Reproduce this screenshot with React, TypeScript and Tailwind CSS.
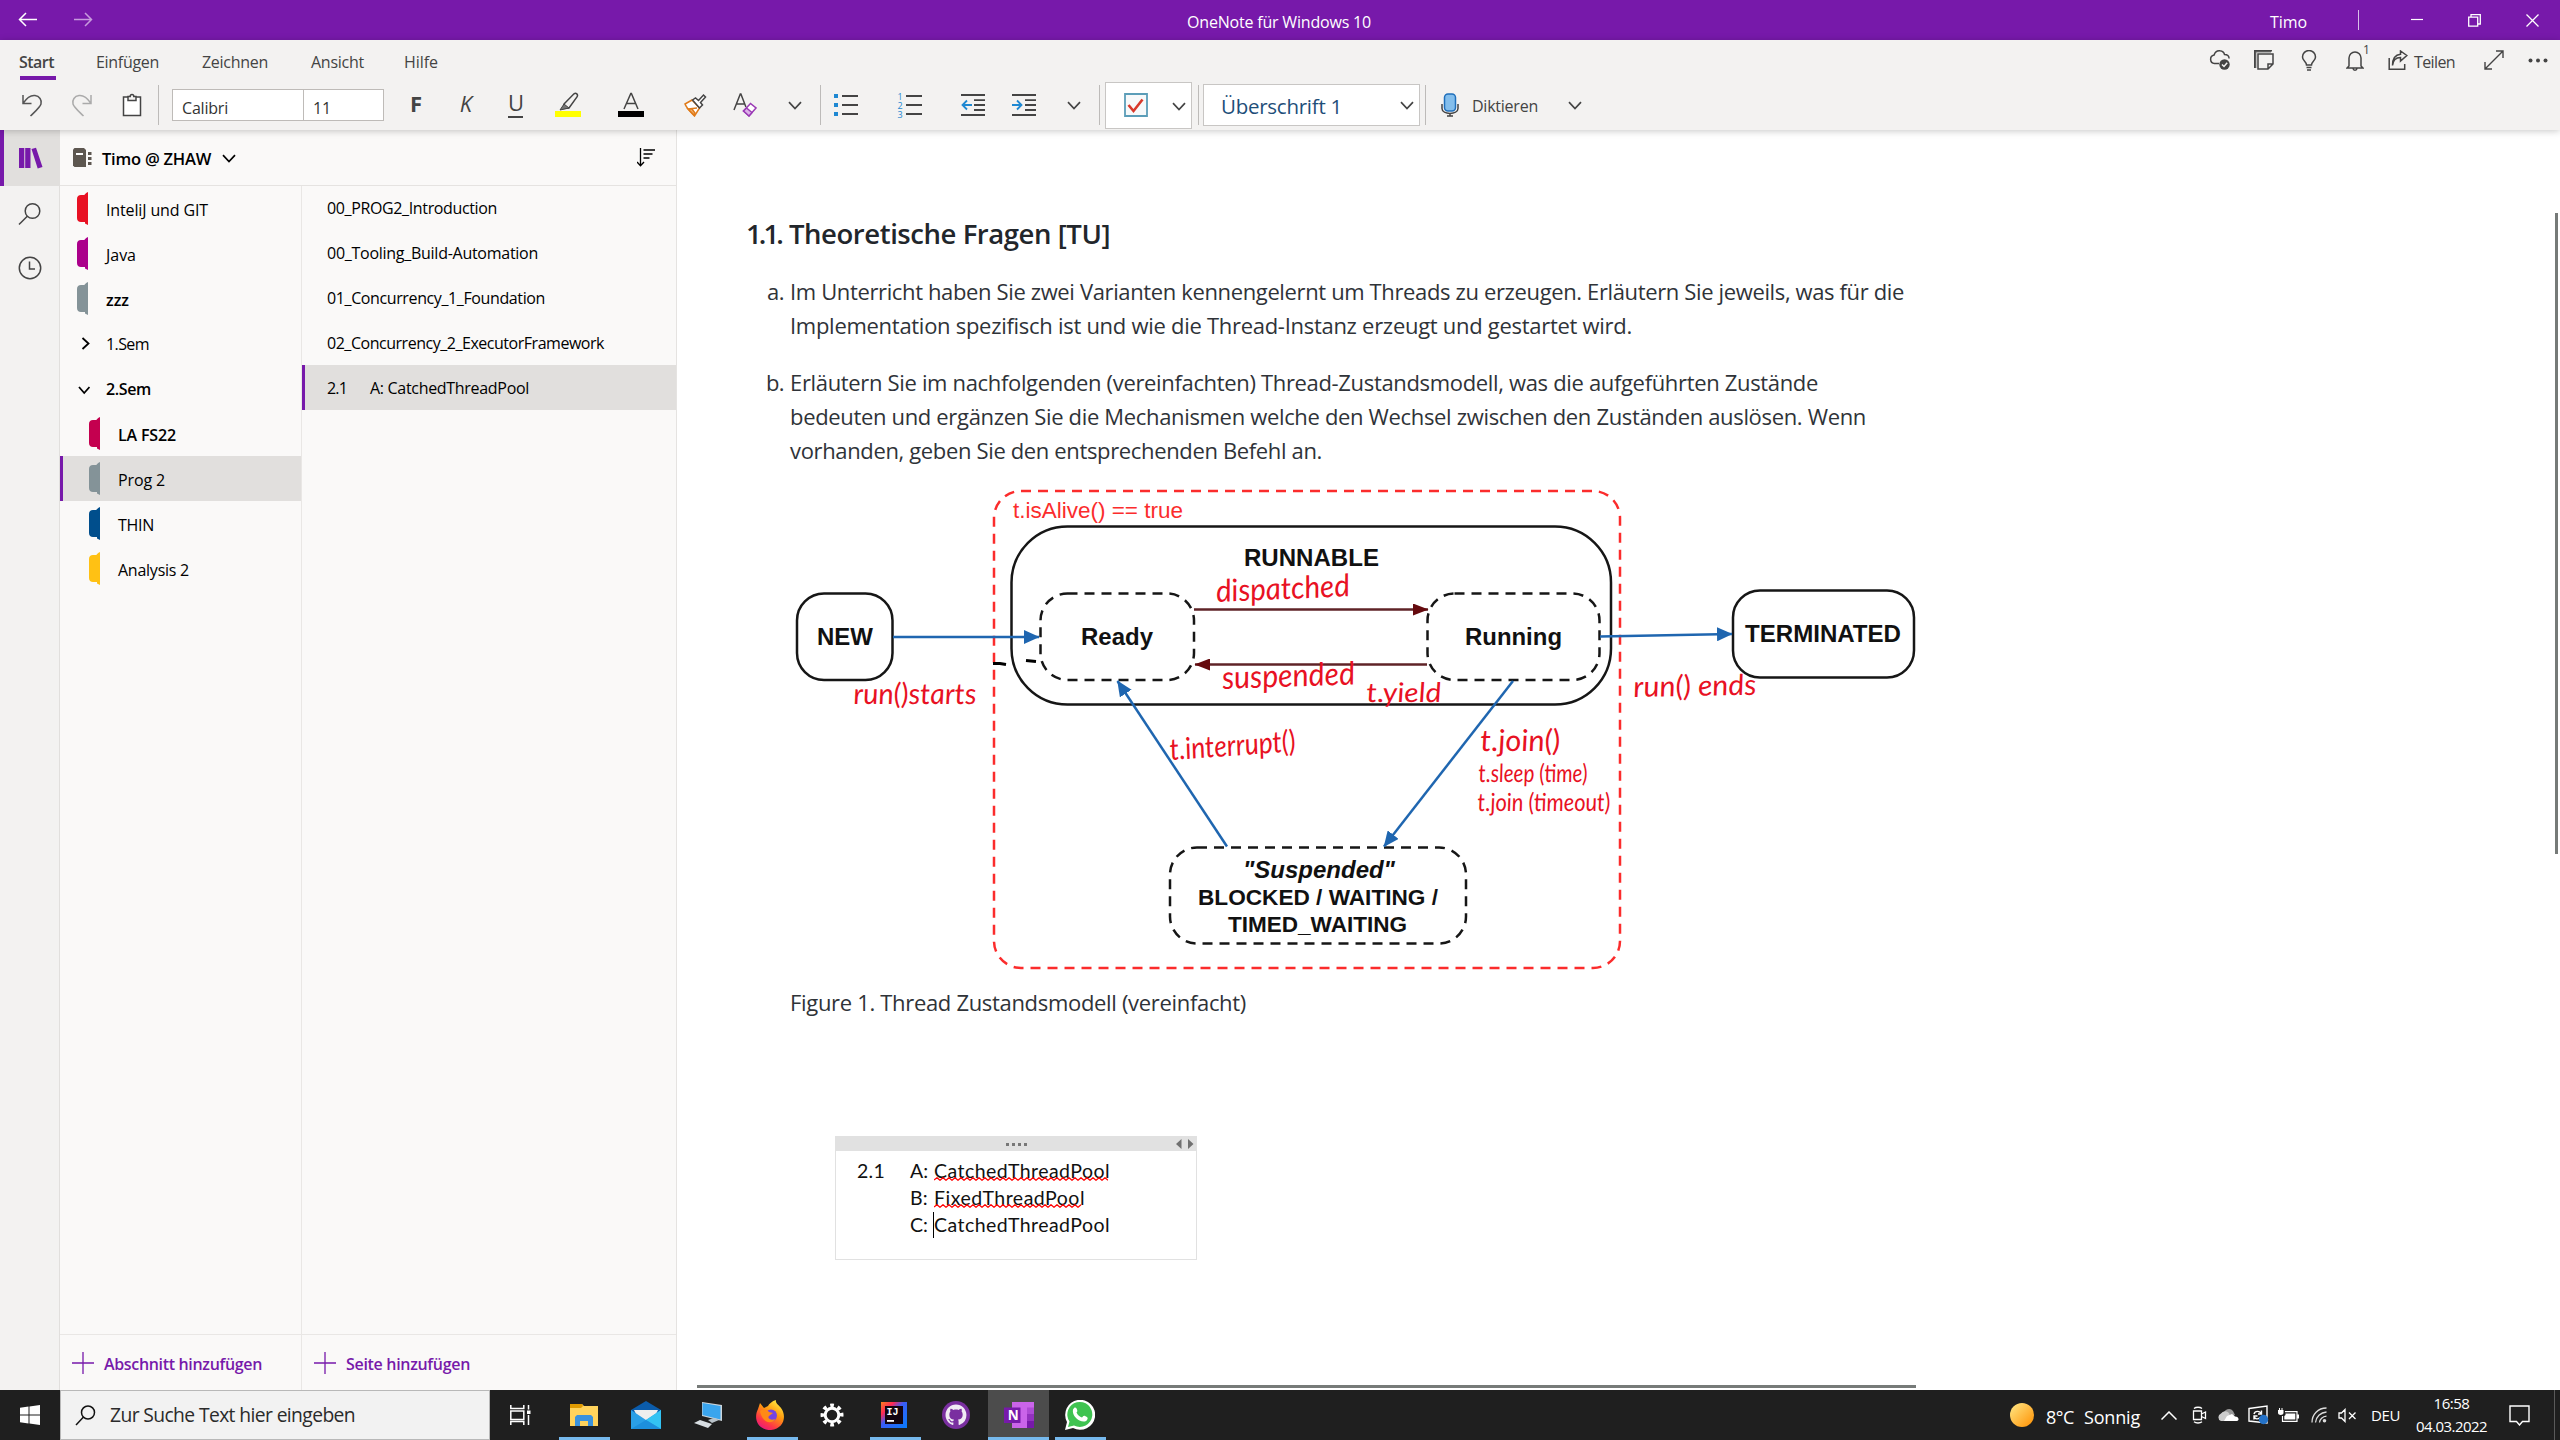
import React, { useLayoutEffect, useRef, useState } from "react";

/* Text whose tracking is computed so that it spans a given width. */
function Fit({ w, children, className = "" }: { w: number; children: string; className?: string }) {
  const ref = useRef<HTMLSpanElement>(null);
  const [ls, setLs] = useState(0);
  useLayoutEffect(() => {
    const el = ref.current;
    if (!el) return;
    el.style.letterSpacing = "0px";
    const nat = el.getBoundingClientRect().width;
    const v = (w - nat) / Math.max(1, children.length);
    el.style.letterSpacing = v + "px";
    setLs(v);
  }, [w, children]);
  return (
    <span ref={ref} className={"inline-block shrink-0 whitespace-pre " + className} style={{ letterSpacing: ls + "px" }}>
      {children}
    </span>
  );
}

type IconProps = { w: number; h: number; children: React.ReactNode; className?: string; sw?: number; vb?: string };
function I({ w, h, children, className = "text-[#444]", sw = 1.5, vb }: IconProps) {
  return (
    <svg width={w} height={h} viewBox={vb ?? `0 0 ${w} ${h}`} fill="none" stroke="currentColor" strokeWidth={sw} className={"block shrink-0 " + className}>
      {children}
    </svg>
  );
}

const Chevron = ({ className = "text-[#444]" }: { className?: string }) => (
  <I w={14} h={9} sw={1.7} className={className}><path d="M1 1.2l6 6.3 6-6.3" /></I>
);
const Cell = ({ className, children }: { className: string; children: React.ReactNode }) => (
  <div className={"flex h-full shrink-0 items-center justify-center " + className}>{children}</div>
);
const Sep = ({ className = "" }: { className?: string }) => <div className={"h-10 w-px shrink-0 bg-[#bdbbb9] " + className} />;

function TitleBar() {
  return (
    <header className="flex h-10 items-center bg-[#7719aa] text-white">
      <div className="flex h-full w-[1187px] items-center gap-[36px] pl-[18px]">
        <I w={20} h={16} className="text-white"><path d="M19 7.5H1.5M8 1L1.5 7.5 8 14" /></I>
        <I w={20} h={16} className="text-[#c79bdd]"><path d="M0 7.5h17.5M11 1l6.500 6.500L11 14" /></I>
      </div>
      <Fit w={184} className="pt-[4px] text-[16px] leading-none">OneNote für Windows 10</Fit>
      <Fit w={37} className="ml-[899px] pt-[4px] text-[16px] leading-none">Timo</Fit>
      <div className="ml-[51px] h-5 w-px bg-[#d9bfe8]" />
      <div className="ml-[52px] flex items-center gap-[45px]">
        <I w={12} h={12} sw={1.200} className="text-white"><path d="M0 5.500h12" /></I>
        <I w={13} h={13} sw={1.300} className="text-white"><path d="M.7 3.200h9v9h-9zM3 3V.7h9.300v9.300H10" /></I>
        <I w={13} h={13} sw={1.300} className="text-white"><path d="M.5.5l12 12M12.500.5l-12 12" /></I>
      </div>
    </header>
  );
}

function Tabs() {
  return (
    <div className="flex h-10 items-center text-[16px] leading-none text-[#444]">
      <div className="relative ml-5 w-[76px] pt-[3px]">
        <Fit w={35} className="-ml-px font-semibold">Start</Fit>
        <div className="absolute left-0 top-[25px] h-[4px] w-[36px] bg-[#7719aa]" />
      </div>
      <Fit w={63} className="pt-[3px]">Einfügen</Fit>
      <Fit w={66} className="ml-[43px] pt-[3px]">Zeichnen</Fit>
      <Fit w={53} className="ml-[43px] pt-[3px]">Ansicht</Fit>
      <Fit w={34} className="ml-[40px] pt-[3px]">Hilfe</Fit>
      <div className="ml-auto flex items-center pr-[12px]">
        <I w={22} h={22} className="mr-[23px]">
          <path d="M10 14.500H5.500a4.300 4.300 0 01-.4-8.500C6 3 8.500 1.500 11 1.800c2.500.2 4 1.800 4.500 3.700 2.500 0 4.500 1.600 4.600 4" />
          <circle cx="15.500" cy="15.500" r="5.200" fill="#444" stroke="none" /><path d="M13 15.500l2 2 3.200-3.800" stroke="#f3f2f1" />
        </I>
        <I w={20} h={20} className="mr-[27px]">
          <path d="M1.200 18V1.200H17" strokeWidth={2.400} stroke="#777" /><path d="M.8 18V.8H18M4 4h15v10l-5 5H4zM19 14h-5v5" />
        </I>
        <I w={17} h={21} className="mr-[28px]"><path d="M5.500 15c0-3.500-4-4-4-8a6.500 6.500 0 0113 0c0 4-4 4.500-4 8zM5.500 17.500h5M6 20h4" /></I>
        <div className="relative mr-[24px]">
          <I w={18} h={21}><path d="M3 16V8a6 6 0 0112 0v8l2 2H1zM7 18.500c.3 2.200 3.700 2.200 4 0" /></I>
          <span className="absolute -top-[6px] left-[17px] text-[12px] leading-none">1</span>
        </div>
        <I w={20} h={20} className="mr-[6px]"><path d="M1.200 8v11.200h15.500V14M4.500 15.500c.5-5 3-8 8-8V11l6.300-5.500L12.500 1v3.200c-5.500.5-8 5-8 11.300z" /></I>
        <Fit w={41} className="mr-[29px] pt-[3px]">Teilen</Fit>
        <I w={20} h={20} sw={1.400} className="mr-[24px]"><path d="M1.500 18.500l17-17M12 1h7v7M1 12v7h7" /></I>
        <I w={20} h={5}><g fill="#444" stroke="none"><circle cx="2.500" cy="2.500" r="2" /><circle cx="10" cy="2.500" r="2" /><circle cx="17.500" cy="2.500" r="2" /></g></I>
      </div>
    </div>
  );
}

function Toolbar() {
  return (
    <div className="flex h-[50px] items-center pl-[7px] text-[#444]">
      <Cell className="w-[50px]"><I w={22} h={24} className="text-[#555]"><path d="M2 2v8.500h8.500M2.200 10.200C6 4.500 10 2 14 2.500c4.500.6 7 4.500 6 8.500-.8 3.200-6 7.500-10.500 12" /></I></Cell>
      <Cell className="w-[50px]"><I w={22} h={24} className="text-[#aaa]"><path d="M20 2v8.500h-8.500M19.800 10.200C16 4.500 12 2 8 2.500 3.500 3.100 1 7 2 11c.8 3.200 6 7.500 10.500 12" /></I></Cell>
      <Cell className="w-[50px]"><I w={20} h={24}><path d="M1.500 4h17v18.500h-17z" fill="#fff" /><path d="M6 7.500V3.500h2.200c0-2.800 3.600-2.800 3.600 0H14v4z" fill="#f3f2f1" /></I></Cell>
      <Sep className="ml-px" />
      <div className="ml-[13px] flex h-[32px] w-[212px] items-center border border-[#bebbb8] bg-white text-[16px] leading-none text-[#333]">
        <div className="flex h-full w-[131px] items-center border-r border-[#bebbb8] pl-[9px]"><Fit w={46} className="pt-[5px]">Calibri</Fit></div>
        <Fit w={18} className="ml-[9px] pt-[5px]">11</Fit>
      </div>
      <Cell className="ml-[6px] w-[52px] pb-1 text-[22px] font-bold leading-none">F</Cell>
      <Cell className="w-[48px] pb-1 text-[22px] italic leading-none">K</Cell>
      <Cell className="w-[52px] pt-[1px]">
        <div className="flex flex-col items-center"><span className="h-[21px] text-[22px] leading-[18px]">U</span><span className="mt-0.5 h-[1.500px] w-[15px] bg-[#444]" /></div>
      </Cell>
      <Cell className="w-[51px]">
        <I w={26} h={26}><path d="M0 19h26v6H0z" fill="#ff0" stroke="none" /><path d="M9 12L19 1.800c2-1.500 4.500.8 3 3L14 16l-5.500.5z" /><path d="M9 12l5 4-9 2z" fill="#777" strokeWidth={1} /></I>
      </Cell>
      <Cell className="w-[76px]">
        <I w={26} h={26}><path d="M0 19h26v6H0z" fill="#000" stroke="none" /><path d="M6 17L12.800 1.500h.6L20 17M8.500 11.500h9" /></I>
      </Cell>
      <Cell className="w-[52px]">
        <I w={24} h={24}><path d="M2 11l7-4 7.500 8-5 8C8 19 4 16 2 11z" fill="#fff" stroke="#e07b1a" /><path d="M5 16l9-1M11 22l-6-6 4 0 3 4z" fill="#f6b26b" stroke="#e07b1a" /><path d="M9.500 7l3-2 3 2.500 5-5.500 2 2-5 5.500 2 2.500-3 3z" fill="#fff" /></I>
      </Cell>
      <Cell className="w-[48px]">
        <I w={24} h={26}><path d="M1 18L7.300 2h.6l5 13M3.500 12h8" /><path d="M10.500 19l7-7.500 5.500 4.500-7 8z" stroke="#9a3ab5" fill="#fff" /><path d="M10.500 19l3-3 5.500 4.500-3 3.500z" stroke="#9a3ab5" fill="#dcb0e8" /></I>
      </Cell>
      <Cell className="w-[51px]"><Chevron /></Cell>
      <Sep />
      <Cell className="w-[49px]">
        <I w={24} h={24} sw={1.800}><path d="M8 3h16M8 12h16M8 21h16" /><path d="M0 1h4v4H0zM0 10h4v4H0zM0 19h4v4H0z" fill="#1e88d2" stroke="none" /></I>
      </Cell>
      <Cell className="w-[79px]">
        <div className="flex gap-[3px]">
          <div className="flex w-[5px] flex-col text-[9px] leading-[9px] text-[#1e88d2]"><span>1</span><span>2</span><span>3</span></div>
          <I w={16} h={26} sw={1.800}><path d="M0 4h16M0 13h16M0 22h16" /></I>
        </div>
      </Cell>
      <Cell className="w-[48px]"><I w={24} h={24} sw={1.800}><path d="M0 2h24M13 7.200h11M13 12h11M13 17h11M0 22h24" /><path d="M11 12H1.500M6 7.500L1.500 12 6 16.500" stroke="#1e88d2" /></I></Cell>
      <Cell className="w-[53px]"><I w={24} h={24} sw={1.800}><path d="M0 2h24M13 7.200h11M13 12h11M13 17h11M0 22h24" /><path d="M0 12h9.500M5 7.500L9.500 12 5 16.500" stroke="#1e88d2" /></I></Cell>
      <Cell className="w-[48px]"><Chevron /></Cell>
      <Sep className="ml-px" />
      <div className="ml-[5px] flex h-[47px] w-[87px] items-center border border-[#c8c6c4] bg-white pl-[18px]">
        <I w={24} h={24}><path d="M1 1h22v22H1z" fill="#f7f9fa" stroke="#5b9db8" strokeWidth={1.800} /><path d="M4.500 12l5 6L18.500 6.500" stroke="#d8392b" strokeWidth={2.600} /></I>
        <div className="ml-[24px] pt-0.5"><Chevron /></div>
      </div>
      <Sep className="ml-[6px]" />
      <div className="ml-[4px] flex h-[42px] w-[217px] items-center border border-[#c8c6c4] bg-white pl-[17px]">
        <Fit w={121} className="pt-[2px] text-[20.500px] leading-none text-[#1e4e79]">Überschrift 1</Fit>
        <div className="ml-[58px] pt-px"><Chevron /></div>
      </div>
      <Sep className="ml-[5px]" />
      <I w={18} h={24} className="ml-[15px]"><rect x="3.500" y="1" width="11" height="17" rx="3.500" fill="#83beec" stroke="#1f6fbb" /><path d="M1 11v4.500c0 6.500 16 6.500 16 0V11M9 20v2.500M6 23h6" /></I>
      <Fit w={66} className="ml-[13px] pt-[2px] text-[16px] leading-none">Diktieren</Fit>
      <Cell className="ml-[13px] w-[48px]"><Chevron /></Cell>
    </div>
  );
}

const TabIcon = ({ color }: { color: string }) => (
  <svg width="11" height="33" viewBox="0 0 11 33" className="block shrink-0" fill={color}>
    <path d="M11 0v33L8 31.500V30H4C1.500 30 0 28.500 0 26V7c0-2.500 1.500-4 4-4h3c1 0 1-2 4-3z" />
  </svg>
);

const sections = [
  { t: "InteliJ und GIT", w: 102, c: "#e81123" },
  { t: "Java", w: 30, c: "#ab008b" },
  { t: "zzz", w: 23, c: "#849398", b: true },
  { t: "1.Sem", w: 43, g: "closed" },
  { t: "2.Sem", w: 45, g: "open", b: true },
  { t: "LA FS22", w: 58, c: "#c4004f", n: true, b: true },
  { t: "Prog 2", w: 47, c: "#849398", n: true, sel: true },
  { t: "THIN", w: 36, c: "#004e8c", n: true },
  { t: "Analysis 2", w: 71, c: "#ffc114", n: true },
];

function Rail() {
  return (
    <div className="flex w-[60px] flex-col border-r border-[#e1dfdd] bg-[#f3f2f1]">
      <div className="flex h-[56px] items-center border-l-4 border-[#7719aa] bg-[#e1dfdd] pl-[15px]">
        <svg width="24" height="22" viewBox="0 0 24 22" fill="#7719aa"><path d="M0 1h5.300v20H0zM6.200 1h5.300v20H6.200zM12.500 2L17 .7 23.500 20l-4.800 1.500z" /></svg>
      </div>
      <div className="flex h-[56px] items-center justify-center"><I w={24} h={24}><circle cx="14.500" cy="9" r="7.300" /><path d="M9.300 14.200L1 22.500" /></I></div>
      <div className="flex h-[52px] items-center justify-center"><I w={24} h={24}><circle cx="12" cy="12" r="10.700" /><path d="M11.500 5.500v7.500H17" /></I></div>
    </div>
  );
}

const AddButton = ({ w, children }: { w: number; children: string }) => (
  <div className="flex h-[56px] items-center border-t border-[#e9e7e5] pl-[12px] text-[#7719aa]">
    <I w={22} h={22} sw={1.300} className="text-[#7719aa]"><path d="M11 0v22M0 11h22" /></I>
    <Fit w={w} className="ml-[10px] pt-[2px] text-[16px] font-semibold leading-none">{children}</Fit>
  </div>
);

function Nav() {
  return (
    <div className="flex w-[617px] flex-col border-r border-[#e5e3e1] bg-[#faf9f8] text-[16px] leading-none text-black">
      <div className="flex h-[56px] shrink-0 items-center border-b border-[#e5e3e1] pl-[13px]">
        <svg width="19" height="20" viewBox="0 0 19 20" fill="#5d5750"><path d="M0 1.500L1.500 0H11l2 2v17H1.500L0 17.500z" /><path d="M3 5h7v2H3z" fill="#fff" /><path d="M15 4h3.500v3H15zM15 9h3.500v3H15zM15 14h3.500v3H15z" /></svg>
        <Fit w={109} className="ml-[10px] pt-[4px] text-[16.500px] font-semibold leading-none">Timo @ ZHAW</Fit>
        <div className="ml-[11px] pt-px"><Chevron className="text-black" /></div>
        <I w={18} h={19} sw={1.300} className="ml-auto mr-[21px]"><path d="M3.500 0v17.500M0 14l3.500 3.800L7 14M6.500 2H18M6.500 6h9M6.500 10h6" /></I>
      </div>
      <div className="flex min-h-0 flex-1">
        <div className="flex w-[242px] flex-col justify-between border-r border-[#e9e7e5]">
          <div>
            {sections.map((s) => (
              <div key={s.t} className={"flex h-[45px] items-center border-l-[3px] " + (s.sel ? "border-[#7719aa] bg-[#e1dfdd] " : "border-transparent ") + (s.n ? "pl-[26px]" : "pl-[14px]")}>
                <div className="flex w-[29px] shrink-0 items-center">
                  {s.c && <TabIcon color={s.c} />}
                  {s.g === "closed" && <I w={9} h={13} sw={1.800} className="ml-1 text-black"><path d="M1.500 1l6 5.500-6 5.500" /></I>}
                  {s.g === "open" && <I w={12} h={9} sw={1.800} className="ml-px mt-1 text-black"><path d="M1 1l5.200 6L11.500 1" /></I>}
                </div>
                <Fit w={s.w} className={(s.g ? "pt-0 " : "pt-0.5 ") + (s.b ? "font-semibold" : "")}>{s.t}</Fit>
              </div>
            ))}
          </div>
          <AddButton w={158}>Abschnitt hinzufügen</AddButton>
        </div>
        <div className="-mt-px flex flex-1 flex-col justify-between">
          <div>
            {[["00_PROG2_Introduction", 170], ["00_Tooling_Build-Automation", 211], ["01_Concurrency_1_Foundation", 218], ["02_Concurrency_2_ExecutorFramework", 277]].map(([t, w]) => (
              <div key={t} className="flex h-[45px] items-center pl-[25px]"><Fit w={w as number}>{t as string}</Fit></div>
            ))}
            <div className="flex h-[45px] items-center border-l-[3px] border-[#7719aa] bg-[#e1dfdd] pl-[22px]">
              <Fit w={20}>2.1</Fit><Fit w={159} className="ml-[23px]">A: CatchedThreadPool</Fit>
            </div>
          </div>
          <AddButton w={124}>Seite hinzufügen</AddButton>
        </div>
      </div>
    </div>
  );
}

type LabelProps = { x: number; y: number; w: number; s?: number; children: string; className?: string };
const Label = ({ x, y, w, s = 23, children, className = "font-bold" }: LabelProps) => (
  <text x={x} y={y} textLength={w} lengthAdjust="spacingAndGlyphs" fontSize={s} fill="#111" className={className}>{children}</text>
);
const Ink = ({ x, y, w, r = 0, s = 27, k = 4, children }: { x: number; y: number; w: number; r?: number; s?: number; k?: number; children: string }) => (
  <text transform={`translate(${x} ${y}) rotate(${r}) skewX(${k})`} textLength={w} lengthAdjust="spacingAndGlyphs" fontSize={s} fill="#e81123" className="font-['Lato',sans-serif] italic">{children}</text>
);

function Diagram() {
  return (
    <svg width="1130" height="484" viewBox="790 487 1130 484" fill="none" stroke="#161616" strokeWidth={2.500} className="block font-['Liberation_Sans',sans-serif]">
      <defs>
        <marker id="blue" markerUnits="userSpaceOnUse" markerWidth="16" markerHeight="14" refX="15" refY="7" orient="auto"><path d="M0 0l15.500 7L0 14z" fill="#1f66b0" stroke="none" /></marker>
        <marker id="dark" markerUnits="userSpaceOnUse" markerWidth="16" markerHeight="12" refX="15" refY="6" orient="auto"><path d="M0 0l15.500 6L0 12z" fill="#650a0e" stroke="none" /></marker>
      </defs>
      <rect x="994" y="491" width="626" height="477" rx="27" stroke="#fb2c2c" strokeDasharray="10 7" />
      <rect x="1011.500" y="526.500" width="599.500" height="178" rx="56" />
      <rect x="797" y="593.500" width="95.500" height="86.500" rx="27" />
      <rect x="1733" y="590.500" width="181" height="87" rx="27" />
      <rect x="1040.500" y="593.500" width="153.500" height="86.500" rx="27" strokeDasharray="10 7" />
      <rect x="1427.500" y="593.500" width="172" height="86.500" rx="27" strokeDasharray="10 7" />
      <rect x="1170" y="847.500" width="296" height="96" rx="27" strokeDasharray="10 7" />
      <g stroke="#1f66b0">
        <path d="M893 637h146" markerEnd="url(#blue)" />
        <path d="M1600 636.500l132-2.500" markerEnd="url(#blue)" />
        <path d="M1227 846.500L1117.500 681" markerEnd="url(#blue)" />
        <path d="M1513 681L1384 846.500" markerEnd="url(#blue)" />
      </g>
      <g stroke="#5f2327">
        <path d="M1194 609.500h234" markerEnd="url(#dark)" />
        <path d="M1427 664.500H1195" markerEnd="url(#dark)" />
      </g>
      <path d="M993 663.500h7l6 1M1026 660.500l10 1" stroke="#000" strokeWidth={3} />
      <g stroke="none">
        <text x="1013" y="518" textLength="170" lengthAdjust="spacingAndGlyphs" fontSize="22" fill="#fb2c2c">t.isAlive() == true</text>
        <Label x={1244} y={566} w={135}>RUNNABLE</Label>
        <Label x={817} y={645} w={56}>NEW</Label>
        <Label x={1081} y={645} w={72}>Ready</Label>
        <Label x={1465} y={645} w={97}>Running</Label>
        <Label x={1745} y={642} w={156}>TERMINATED</Label>
        <Label x={1243} y={878} w={152} className="font-bold italic">"Suspended"</Label>
        <Label x={1198} y={905} w={240} s={22}>BLOCKED / WAITING /</Label>
        <Label x={1228} y={932} w={179} s={22}>TIMED_WAITING</Label>
        <Ink x={1217} y={602} w={134} r={-2.500} s={31}>dispatched</Ink>
        <Ink x={1223} y={689} w={133} r={-2} s={32}>suspended</Ink>
        <Ink x={854} y={704} w={123} s={29}>run()starts</Ink>
        <Ink x={1367} y={702} w={75}>t.yield</Ink>
        <Ink x={1634} y={697} w={123} r={-1} s={29}>run() ends</Ink>
        <Ink x={1171} y={760} w={126} r={-4} s={30}>t.interrupt()</Ink>
        <Ink x={1481} y={751} w={80} s={30}>t.join()</Ink>
        <Ink x={1479} y={782} w={109} s={25}>t.sleep (time)</Ink>
        <Ink x={1478} y={811} w={133} s={25}>t.join (timeout)</Ink>
      </g>
    </svg>
  );
}

const Squiggle = ({ w }: { w: number }) => {
  let d = "M0 3";
  for (let x = 3, up = true; x <= w; x += 3, up = !up) d += `L${x} ${up ? 0.7 : 3.3}`;
  return <svg width={w} height="4" viewBox={`0 0 ${w} 4`} className="absolute left-0 top-[20px]" fill="none" stroke="#f00" strokeWidth="1.200"><path d={d} /></svg>;
};

function Note() {
  const rows: [string, string, string, number, boolean][] = [["2.1", "A:", "CatchedThreadPool", 175, true], ["", "B:", "FixedThreadPool", 150, true], ["", "C:", "CatchedThreadPool", 175, false]];
  return (
    <div className="ml-[158px] mt-[117px] h-[124px] w-[362px] border border-[#e1e1e1] bg-white">
      <div className="relative flex h-[14px] items-center justify-center gap-[3px] bg-[#e1e1e1]">
        {[0, 1, 2, 3].map((i) => <span key={i} className="h-[3px] w-[3px] bg-[#777]" />)}
        <svg width="18" height="10" className="absolute right-[2px] top-[2px]" fill="#707070"><path d="M5.500 0v10L0 5zM12 0v10l5.500-5z" /></svg>
      </div>
      <div className="pl-[21px] pt-[6px] font-['Lato',sans-serif] text-[19.500px] leading-[27px] text-[#111]">
        {rows.map(([n, l, t, w, sp], i) => (
          <div key={i} className="flex h-[27px]">
            <div className="w-[53px] shrink-0">{n && <Fit w={28}>{n}</Fit>}</div>
            <div className="w-[24px] shrink-0"><Fit w={18}>{l}</Fit></div>
            <div className="relative">
              {!sp && <span className="absolute -left-px top-px h-[26px] w-px bg-black" />}
              <Fit w={w + 1}>{t}</Fit>
              {sp && <Squiggle w={w - 1} />}
            </div>
          </div>
        ))}
      </div>
    </div>
  );
}

function Page() {
  const line = "flex h-[34px] items-center";
  return (
    <main className="relative min-w-0 flex-1 bg-white text-[22px] leading-none text-[#2f3338]">
      <div className="pt-[87px]">
        <div className="flex h-[34px] items-center pl-[69px] text-[27.500px] font-semibold text-[#22262b]">
          <Fit w={35}>1.1.</Fit><Fit w={321} className="ml-[8px]">Theoretische Fragen [TU]</Fit>
        </div>
        <div className="mt-[23px] flex">
          <Fit w={17} className="ml-[90px] mr-[6px] pt-[6px]">a.</Fit>
          <div>
            <div className={line}><Fit w={1114}>Im Unterricht haben Sie zwei Varianten kennengelernt um Threads zu erzeugen. Erläutern Sie jeweils, was für die</Fit></div>
            <div className={line}><Fit w={842}>Implementation spezifisch ist und wie die Thread-Instanz erzeugt und gestartet wird.</Fit></div>
          </div>
        </div>
        <div className="mt-[23px] flex">
          <Fit w={18} className="ml-[89px] mr-[6px] pt-[6px]">b.</Fit>
          <div>
            <div className={line}><Fit w={1028}>Erläutern Sie im nachfolgenden (vereinfachten) Thread-Zustandsmodell, was die aufgeführten Zustände</Fit></div>
            <div className={line}><Fit w={1076}>bedeuten und ergänzen Sie die Mechanismen welche den Wechsel zwischen den Zuständen auslösen. Wenn</Fit></div>
            <div className={line}><Fit w={532}>vorhanden, geben Sie den entsprechenden Befehl an.</Fit></div>
          </div>
        </div>
        <div className="ml-[113px] mt-[20px]"><Diagram /></div>
        <div className="ml-[113px] mt-[14px] flex h-[34px] items-center"><Fit w={456}>Figure 1. Thread Zustandsmodell (vereinfacht)</Fit></div>
        <Note />
      </div>
      <div className="absolute bottom-[2px] left-[20px] h-[3px] w-[1219px] bg-[#767a78]" />
      <div className="absolute right-[2px] top-[83px] h-[641px] w-[3px] bg-[#767a78]" />
    </main>
  );
}

function TaskItem({ className, line, children }: { className: string; line?: string; children: React.ReactNode }) {
  return (
    <div className={"relative flex h-full shrink-0 items-center justify-center " + className}>
      {children}
      {line && <div className={"absolute bottom-0 h-[3px] bg-[#76b9ed] " + line} />}
    </div>
  );
}

function Taskbar() {
  return (
    <footer className="flex h-[50px] items-center bg-[#1f1f1f] text-white">
      <div className="flex w-[60px] justify-center"><svg width="20" height="20" fill="#fff"><path d="M0 2.800L8.500 1.600v7.900H0zM9.500 1.400L20 0v9.500H9.500zM0 10.500h8.500v7.900L0 17.200zM9.500 10.500H20V20L9.500 18.600z" /></svg></div>
      <div className="flex h-full w-[430px] items-center border border-[#b8b8b8] bg-[#f2f2f2] pl-[14px]">
        <I w={21} h={21} className="text-[#111]"><circle cx="13" cy="7.500" r="6.500" /><path d="M8.500 12L1 20" /></I>
        <Fit w={245} className="ml-[14px] text-[19.300px] leading-none text-[#2b2b2b]">Zur Suche Text hier eingeben</Fit>
      </div>
      <TaskItem className="w-[60px]"><I w={21} h={20} className="text-white"><path d="M.8 0v3.500h13V0M.8 6h13v8.500h-13zM.8 20v-3.500h13V20M18.500 0v4.500M18.500 10v10" /><path d="M17 5.500h3.500V9H17z" fill="#fff" stroke="none" /></I></TaskItem>
      <TaskItem className="w-[68px]" line="left-[9px] w-[51px]">
        <svg width="28" height="24" viewBox="0 0 28 24"><path d="M0 1h12l2 2h14v20H0z" fill="#ffd35c" /><path d="M0 1h12l1 2-2 2H0z" fill="#e09a00" /><path d="M5 23v-9l2-2h14l2 2v9h-5v-5h-8v5z" fill="#3a92dd" /></svg>
      </TaskItem>
      <TaskItem className="w-[56px]">
        <svg width="30" height="28" viewBox="0 0 30 28"><path d="M0 9L15 0l15 9v4H0z" fill="#0b5cab" /><path d="M3 9h24l-3 6-9 5-9-5z" fill="#eee" /><path d="M0 9l15 10L30 9v19H0z" fill="#2a9fe6" /><path d="M15 19L30 9v19z" fill="#33c3f3" /><path d="M15 19l15 9H0z" fill="#1d8fdc" /></svg>
      </TaskItem>
      <TaskItem className="w-[68px]">
        <svg width="28" height="26" viewBox="0 0 28 26"><path d="M8 0l20 3v16L8 14z" fill="#ccd5db" /><path d="M8.500 1l18 3v13.500L8.500 13z" fill="#3aa5ee" /><path d="M14 18l6-2 5 2-7 3z" fill="#b9c3ca" /><path d="M0 21l6-3 12 4-4 4z" fill="#d8dee2" /></svg>
      </TaskItem>
      <TaskItem className="w-[58px]" line="left-[5px] w-[51px]">
        <svg width="30" height="30" viewBox="0 0 30 30">
          <defs><linearGradient id="ff" x1="0.800" y1="0" x2="0.200" y2="1"><stop offset="0" stopColor="#fff044" /><stop offset=".4" stopColor="#ff980e" /><stop offset=".75" stopColor="#ff3647" /><stop offset="1" stopColor="#e31587" /></linearGradient></defs>
          <path d="M2 9l2-6 4 5 4-2c1-2 4-5 8-6-1 3 3 5 5 8 6 8 3 21-10 22C2 30-3 19 2 9z" fill="url(#ff)" />
          <circle cx="15" cy="15.500" r="6" fill="#7543e3" /><path d="M4 11c4-3 7-2 9 1l4 1-4 3c-2 2 1 5 6 3-3 6-13 4-15-8z" fill="#ff8a16" />
        </svg>
      </TaskItem>
      <TaskItem className="w-[64px]">
        <svg width="24" height="24" viewBox="0 0 24 24" fill="none" stroke="#fff"><circle cx="12" cy="12" r="6.800" strokeWidth="3" /><circle cx="12" cy="12" r="9.700" strokeWidth="3.600" strokeDasharray="3.600 4.018" transform="rotate(-12 12 12)" /></svg>
      </TaskItem>
      <TaskItem className="w-[60px]" line="left-[6px] w-[51px]">
        <svg width="26" height="26" viewBox="0 0 26 26"><defs><linearGradient id="ij" x1="0" y1="0" x2="1" y2="1"><stop offset="0" stopColor="#fc801d" /><stop offset=".25" stopColor="#fe2857" /><stop offset=".45" stopColor="#3a5cf5" /><stop offset="1" stopColor="#087cfa" /></linearGradient></defs><path d="M0 0h26v26H0z" fill="url(#ij)" /><path d="M4 4h18v18H4z" fill="#12040f" /><text x="5.500" y="13" fontSize="10" fontWeight="700" fill="#fff" fontFamily="Liberation Mono">IJ</text><path d="M6 18h7v1.800H6z" fill="#fff" /></svg>
      </TaskItem>
      <TaskItem className="w-[64px]">
        <svg width="28" height="28" viewBox="0 0 28 28"><circle cx="14" cy="14" r="14" fill="#7a2fa0" /><g transform="translate(3.500 3.500) scale(1.310)"><path fill="#f0eaf4" d="M8 0C3.580 0 0 3.580 0 8c0 3.540 2.290 6.530 5.470 7.590.4.070.55-.17.55-.38 0-.19-.01-.82-.01-1.490-2.010.37-2.530-.49-2.690-.94-.09-.23-.48-.94-.82-1.130-.28-.15-.68-.52-.01-.53.63-.01 1.080.58 1.230.82.72 1.210 1.870.87 2.330.66.07-.52.28-.87.51-1.070-1.780-.2-3.640-.89-3.640-3.950 0-.87.31-1.590.82-2.150-.08-.2-.36-1.020.08-2.120 0 0 .67-.21 2.200.82.64-.18 1.320-.27 2-.27s1.360.09 2 .27c1.530-1.040 2.200-.82 2.200-.82.44 1.100.16 1.920.08 2.120.51.56.82 1.270.82 2.150 0 3.070-1.870 3.750-3.650 3.950.29.25.54.73.54 1.480 0 1.070-.01 1.930-.01 2.200 0 .21.15.46.55.38A8.010 8.010 0 0016 8c0-4.420-3.580-8-8-8z" /></g></svg>
      </TaskItem>
      <TaskItem className="w-[61px] bg-[#4c4c4c]" line="left-0 w-full">
        <svg width="30" height="26" viewBox="0 0 30 26"><path d="M8 0h22v26H8z" fill="#ca64ea" /><path d="M23 5.500h7V12h-7z" fill="#ae4bd5" /><path d="M23 12h7v7h-7z" fill="#9332bf" /><path d="M23 19h7v7h-7z" fill="#7719aa" /><path d="M0 5.500h16.500v15.500H0z" fill="#7719aa" /><text x="3.700" y="18" fontSize="13.500" fontWeight="700" fill="#fff">N</text></svg>
      </TaskItem>
      <TaskItem className="w-[62px]" line="left-[6px] w-[51px]">
        <svg width="30" height="30" viewBox="0 0 30 30"><path d="M0 30l2-8a15 15 0 116 6z" fill="#fff" /><path d="M3 27l1.500-5.500a12.500 12.500 0 114.500 4z" fill="#3fc351" /><path d="M8 9.500c1.500-3 3.300-2.500 4 0 .8 2 0 2-.5 3 1.500 3 3 4.200 5.500 5 1-1 1.500-2.300 3-1.500 2.500 1.200 3 1.500 2.500 3-1 3-4.500 3.300-8 1.500-3.500-2-7.500-6-6.500-11z" fill="#fff" /></svg>
      </TaskItem>
      <div className="ml-auto flex h-full items-center text-[15px] leading-none">
        <svg width="24" height="24"><defs><linearGradient id="sun" x1="0" y1="0" x2="1" y2="1"><stop offset="0.100" stopColor="#ffe07a" /><stop offset="1" stopColor="#ff8f00" /></linearGradient></defs><circle cx="12" cy="12" r="12" fill="url(#sun)" /></svg>
        <Fit w={28} className="ml-[12px] pt-[3px] text-[18px]">8°C</Fit>
        <Fit w={56} className="ml-[10px] pt-[3px] text-[18px]">Sonnig</Fit>
        <I w={16} h={9} className="ml-[21px] text-white"><path d="M.5 8.500L8 1l7.500 7.500" /></I>
        <I w={15} h={18} sw={1.300} className="ml-[15px] text-white"><path d="M1.500 5h8v8.500h-8zM9.500 8l4-2v6.500l-4-2M2 2.500C4 .8 8 .8 10 2.500M2 15.800c2 1.600 6 1.600 8 0" /></I>
        <svg width="21" height="14" className="ml-[11px]"><path d="M6 6a5 5 0 019-3l2 4-9 5z" fill="#999" /><path d="M3 13a4 4 0 010-7.500A5 5 0 0111 5l3 8z" fill="#ccc" /><path d="M6 13l3-5 5-2 3 2.500c4 0 5 4.500 1 4.500z" fill="#fff" /></svg>
        <I w={21} h={20} sw={1.400} className="ml-[9px] text-white"><path d="M1 3.500L19 1v17L1 16zM6 9c1-3.500 6-3.500 7 0M13.500 5.500V9H10M6 14.500V11h3.500M6 11.500c1 3 4 3 6 1" /><circle cx="15.500" cy="14.500" r="4.700" fill="#2472c8" stroke="none" /></I>
        <I w={21} h={15} sw={1.200} className="ml-[9px] text-white"><path d="M7 3.600h12v9.800H4.500V8" /><path d="M7.500 5.500h9.800v6H6.300V8l1.200-1zM19 6.500h2v4h-2zM0 2h5.500v3c0 2.500-5.500 2.500-5.500 0zM1 0h1v2H1zM3.500 0h1v2h-1z" fill="#fff" stroke="none" /></I>
        <I w={16} h={16} sw={1.300} className="ml-[12px] text-[#ddd]"><path d="M1 15.500C1 7.500 7 1 15.500 1M4.500 15.500C5 10 9.500 5.300 15.500 5M8.500 15.500c.3-3 3-6 7-6.300" /><circle cx="13.500" cy="13.700" r="1.800" fill="#ddd" stroke="none" /></I>
        <I w={20} h={15} sw={1.300} className="ml-[11px] text-white"><path d="M1 5h2.500l3.500-3.500v12L3.500 10H1zM11 4.500l6.500 6.500M17.500 4.500L11 11" /></I>
        <Fit w={29} className="ml-[13px] pt-[1px]">DEU</Fit>
        <div className="ml-[16px] flex w-[71px] flex-col items-center gap-[8px]">
          <Fit w={36}>16:58</Fit>
          <Fit w={71}>04.03.2022</Fit>
        </div>
        <I w={21} h={21} sw={1.400} className="ml-[22px] text-white"><path d="M1 1h19v15.500h-6.500l-3 3.500-3-3.500H1z" /></I>
        <div className="ml-[24px] mr-[5px] h-full w-px bg-[#5a5a5a]" />
      </div>
    </footer>
  );
}

export default function App() {
  return (
    <div className="flex h-[1440px] w-[2560px] flex-col overflow-hidden bg-white font-['Open_Sans',sans-serif]">
      <TitleBar />
      <div className="relative z-10 h-[90px] bg-[#f3f2f1] shadow-[0_1px_7px_rgba(0,0,0,0.22)]">
        <Tabs />
        <Toolbar />
      </div>
      <div className="flex min-h-0 flex-1">
        <Rail />
        <Nav />
        <Page />
      </div>
      <Taskbar />
    </div>
  );
}
